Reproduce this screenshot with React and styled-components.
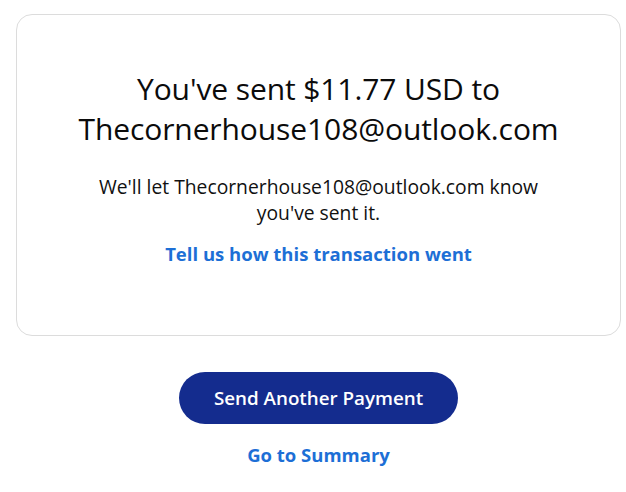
import React from "react";
import styled, { createGlobalStyle } from "styled-components";

const GlobalStyle = createGlobalStyle`
  body {
    margin: 0;
    background: #ffffff;
    font-family: "Open Sans", Lato, sans-serif;
    color: #001435;
  }
`;

const Page = styled.main`
  width: 626px;
  min-height: 492px;
  box-sizing: border-box;
  padding: 14px 5px 0 16px;
  display: flex;
  flex-direction: column;
  align-items: center;
`;

const Card = styled.section`
  width: 100%;
  height: 322px;
  box-sizing: border-box;
  border: 1px solid #dcdcdc;
  border-radius: 16px;
  display: flex;
  flex-direction: column;
  align-items: center;
  padding: 54px 10px 0;
  text-align: center;
`;

const Heading = styled.h1`
  margin: 0;
  font-size: 30px;
  font-weight: 400;
  line-height: 40px;
  letter-spacing: -0.1px;
  color: #0b0b0b;
`;

const Note = styled.p`
  margin: 25px 0 0;
  font-size: 19.3px;
  line-height: 26px;
  color: #111;
`;

const TextLink = styled.a`
  display: block;
  margin-top: ${(p) => p.$top || 0}px;
  font-size: 18.5px;
  font-weight: 700;
  line-height: 26px;
  color: #1d6fd6;
  text-decoration: none;
  cursor: pointer;
`;

const PrimaryButton = styled.button`
  margin-top: 36px;
  width: 279px;
  height: 52px;
  border: none;
  border-radius: 26px;
  background: #142c8e;
  color: #ffffff;
  font-family: inherit;
  font-size: 18.8px;
  font-weight: 600;
  cursor: pointer;
`;

export default function App() {
  return (
    <>
      <GlobalStyle />
      <Page>
        <Card>
          <Heading>
            You've sent $11.77 USD to
            <br />
            Thecornerhouse108@outlook.com
          </Heading>
          <Note>
            We'll let Thecornerhouse108@outlook.com know
            <br />
            you've sent it.
          </Note>
          <TextLink $top={15}>Tell us how this transaction went</TextLink>
        </Card>
        <PrimaryButton>Send Another Payment</PrimaryButton>
        <TextLink $top={18}>Go to Summary</TextLink>
      </Page>
    </>
  );
}
